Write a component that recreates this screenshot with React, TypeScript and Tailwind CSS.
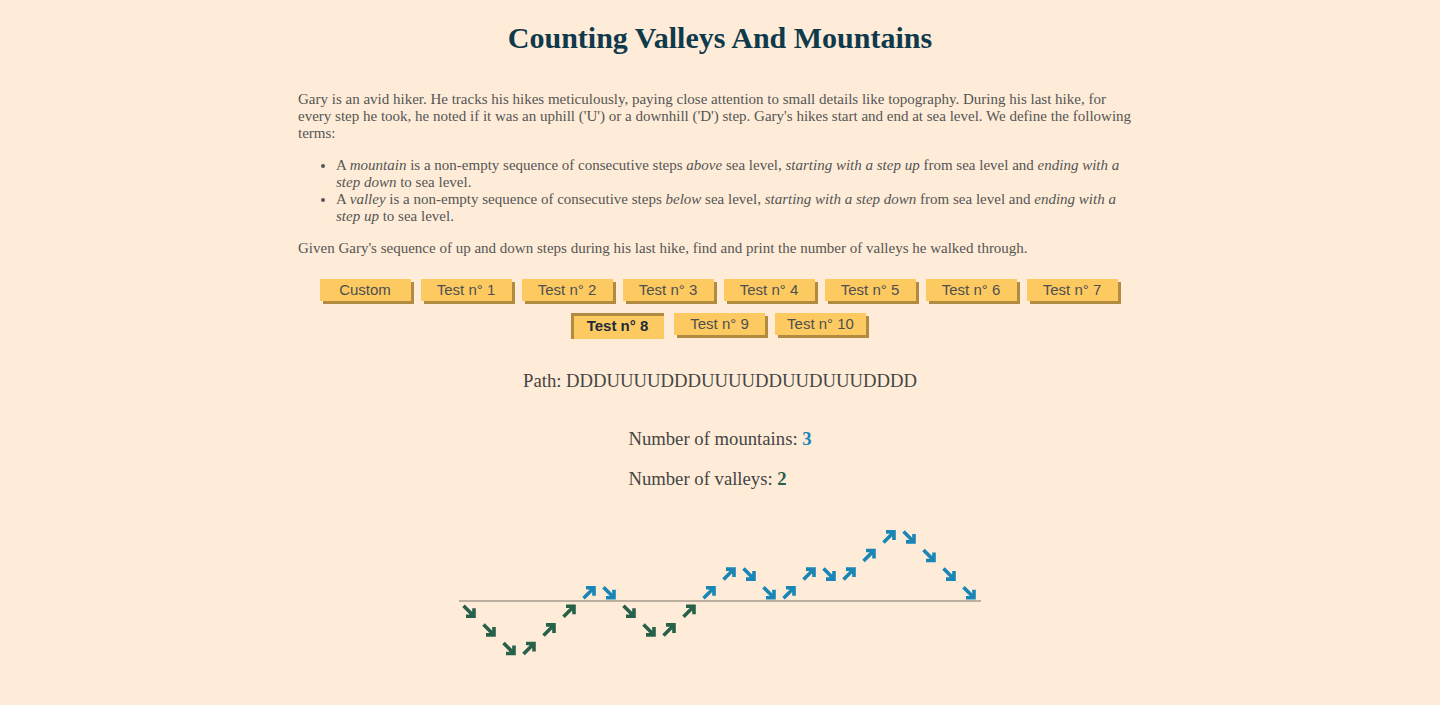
import React from 'react';

const PATH = 'DDDUUUUDDDUUUUDDUUDUUUDDDD';
const TESTS = ['Custom', 'Test n° 1', 'Test n° 2', 'Test n° 3', 'Test n° 4', 'Test n° 5', 'Test n° 6', 'Test n° 7', 'Test n° 8', 'Test n° 9', 'Test n° 10'];
const SELECTED = 'Test n° 8';

function StepArrow({ x, y, up, color }: { x: number; y: number; up: boolean; color: string }) {
  // ~14px arrow centred on (x, y)
  const d = up ? 'M-5.5 5.5 L4.5 -4.5 M-3 -5 L5 -5 L5 3' : 'M-5.5 -5.5 L4.5 4.5 M-3 5 L5 5 L5 -3';
  return (
    <path
      d={d}
      transform={`translate(${x} ${y})`}
      fill="none"
      stroke={color}
      strokeWidth={3.6}
      strokeLinecap="butt"
      strokeLinejoin="miter"
    />
  );
}

function HikeChart() {
  const width = 522;
  const height = 150;
  const seaY = 80;
  const stepX = 20;
  const stepY = 18.6;
  let level = 0;
  const arrows = PATH.split('').map((c, i) => {
    const up = c === 'U';
    const band = up ? level : level - 1;
    level += up ? 1 : -1;
    const cx = 10 + i * stepX;
    const cy = seaY + 1 - (band + 0.5) * stepY;
    const color = band >= 0 ? '#1a86b6' : '#27614a';
    return <StepArrow key={i} x={cx} y={cy} up={up} color={color} />;
  });
  return (
    <svg width={width} height={height} viewBox={`0 0 ${width} ${height}`} className="block">
      <line x1={0} y1={seaY} x2={width} y2={seaY} stroke="#7a7369" strokeWidth={1} />
      {arrows}
    </svg>
  );
}

export default function App() {
  const mountains = 3;
  const valleys = 2;
  return (
    <div className="min-h-screen w-full bg-[#feecd8] text-[#555] pb-10" style={{ fontFamily: '"Liberation Serif", "Times New Roman", serif' }}>
      <h1 className="pt-[20px] text-center text-[30px] leading-[36px] font-bold text-[#0e3a4c]">
        Counting Valleys And Mountains
      </h1>

      <div className="mx-auto mt-[35px] w-[844px] pr-[4px] text-[15px] leading-[17px]">
        <p>
          Gary is an avid hiker. He tracks his hikes meticulously, paying close attention to small details like topography. During his last hike, for every step he took, he noted if it was an uphill ('U') or a downhill ('D') step. Gary's hikes start and end at sea level. We define the following terms:
        </p>
        <ul className="mt-[15px] list-disc pl-[38px]">
          <li>
            A <em>mountain</em> is a non-empty sequence of consecutive steps <em>above</em> sea level, <em>starting with a step up</em> from sea level and <em>ending with a step down</em> to sea level.
          </li>
          <li>
            A <em>valley</em> is a non-empty sequence of consecutive steps <em>below</em> sea level, <em>starting with a step down</em> from sea level and <em>ending with a step up</em> to sea level.
          </li>
        </ul>
        <p className="mt-[15px]">
          Given Gary's sequence of up and down steps during his last hike, find and print the number of valleys he walked through.
        </p>
      </div>

      <div className="mx-auto mt-[22px] flex w-[820px] flex-wrap justify-center gap-x-[10px] gap-y-[11px] pr-[3px]" style={{ fontFamily: '"Liberation Sans", Arial, sans-serif' }}>
        {TESTS.map((t) => {
          const active = t === SELECTED;
          return (
            <button
              key={t}
              className={
                active
                  ? 'h-[26px] w-[93px] bg-[#fdca62] text-[15px] font-bold text-[#1d2c3a] shadow-[inset_3px_3px_0_#b08b40]'
                  : 'mb-[1px] h-[22px] w-[91px] bg-[#fdca62] text-[15px] text-[#4f4f4f] shadow-[3px_3px_0_#b08b40]'
              }
            >
              {t}
            </button>
          );
        })}
      </div>

      <p className="mt-[31px] text-center text-[18.7px] leading-[22px] text-[#454545]">
        Path: {PATH}
      </p>

      <div className="mt-[36px] flex justify-center">
        <div className="text-[18.7px] leading-[22px] text-[#454545]">
          <p>
            Number of mountains: <b className="text-[#1a86b6]">{mountains}</b>
          </p>
          <p className="mt-[18px]">
            Number of valleys: <b className="text-[#27614a]">{valleys}</b>
          </p>
        </div>
      </div>

      <div className="mt-[31px] flex justify-center">
        <HikeChart />
      </div>
    </div>
  );
}
